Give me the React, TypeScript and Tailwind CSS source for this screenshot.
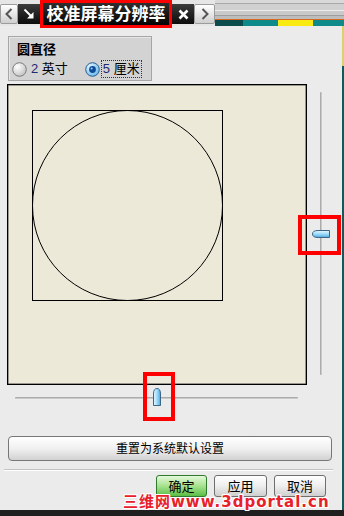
import React from 'react';

function SliderThumb({ vertical }: { vertical?: boolean }) {
    // bullet shaped thumb, pointing up (horizontal slider) or left (vertical slider)
    return (
        <svg width={vertical ? 18 : 8} height={vertical ? 8 : 18} viewBox={vertical ? '0 0 18 8' : '0 0 8 18'}>
            <defs>
                <linearGradient id={vertical ? 'tv' : 'th'} x1="0" y1="0" x2={vertical ? '0' : '1'} y2={vertical ? '1' : '0'}>
                    <stop offset="0" stopColor="#e6f8ff" />
                    <stop offset="0.5" stopColor="#9fdcfb" />
                    <stop offset="1" stopColor="#4ea8e0" />
                </linearGradient>
            </defs>
            {vertical ? (
                <path d="M17.5 0.5 H6 Q0.5 0.5 0.5 4 Q0.5 7.5 6 7.5 H17.5 Z" fill="url(#tv)" stroke="#3d6584" />
            ) : (
                <path d="M0.5 17.5 V6 Q0.5 0.5 4 0.5 Q7.5 0.5 7.5 6 V17.5 Z" fill="url(#th)" stroke="#3d6584" />
            )}
        </svg>
    );
}

function Radio({ checked }: { checked?: boolean }) {
    return (
        <svg width="15" height="15" viewBox="0 0 15 15">
            <defs>
                <radialGradient id={checked ? 'rc' : 'ru'} cx="0.35" cy="0.3" r="0.8">
                    <stop offset="0" stopColor={checked ? '#e8f6ff' : '#ffffff'} />
                    <stop offset="1" stopColor={checked ? '#5fb4ea' : '#bdbdbd'} />
                </radialGradient>
            </defs>
            <circle cx="7.5" cy="7.5" r="6.8" fill={`url(#${checked ? 'rc' : 'ru'})`} stroke={checked ? '#2a5f94' : '#7c7c7c'} />
            {checked && <circle cx="7.5" cy="7.5" r="3.4" fill="#0b4b98" />}
            {checked && <circle cx="6.6" cy="6.6" r="1" fill="#9fd0ff" />}
        </svg>
    );
}

export default function App() {
    return (
        <div className="relative w-[344px] h-[516px] overflow-hidden flex flex-col bg-[#ebebeb] font-[family-name:'Liberation_Sans','Noto_Sans_CJK_SC',sans-serif] text-black">
            {/* tab strip */}
            <div className="h-[26px] flex relative z-10">
                <div className="w-[215px] flex items-start bg-[#e6e6e6]">
                    <div className="mt-[4px] w-[18px] h-[20px] rounded-[2px] border border-[#9c9c9c] bg-gradient-to-b from-white to-[#cfcfcf] flex items-center justify-center">
                        <svg width="8" height="12" viewBox="0 0 8 12">
                            <path d="M6.5 1 L1.5 6 L6.5 11" fill="none" stroke="#555" strokeWidth="2" />
                        </svg>
                    </div>
                    <div className="mt-[4px] w-[22px] h-[20px] bg-gradient-to-b from-[#3c3c3c] to-[#0c0c0c] flex items-center justify-center">
                        <svg width="12" height="12" viewBox="0 0 12 12">
                            <path d="M1.5 1.5 L8 8" stroke="#fff" strokeWidth="2" />
                            <path d="M4 10.5 H10.5 V4 Z" fill="#fff" />
                        </svg>
                    </div>
                    <div className="w-[132px] h-[28px] border-[3px] border-[#ff0000] bg-gradient-to-b from-[#2e2e2e] to-[#050505] flex items-center justify-center">
                        <span className="text-[17px] leading-none font-bold text-white">校准屏幕分辨率</span>
                    </div>
                    <div className="mt-[4px] w-[22px] h-[20px] bg-gradient-to-b from-[#3c3c3c] to-[#0c0c0c] flex items-center justify-center">
                        <svg width="11" height="11" viewBox="0 0 11 11">
                            <path d="M1.5 1.5 L9.5 9.5 M9.5 1.5 L1.5 9.5" stroke="#fff" strokeWidth="2.6" />
                        </svg>
                    </div>
                    <div className="mt-[4px] w-[21px] h-[20px] rounded-[2px] border border-[#9c9c9c] bg-gradient-to-b from-white to-[#cfcfcf] flex items-center justify-center">
                        <svg width="8" height="12" viewBox="0 0 8 12">
                            <path d="M1.5 1 L6.5 6 L1.5 11" fill="none" stroke="#555" strokeWidth="2" />
                        </svg>
                    </div>
                </div>
                <div className="flex-1 flex flex-col">
                    <div className="h-[3px] bg-[#d9d9d9]" />
                    <div className="h-px bg-[#a9a9a9]" />
                    <div className="h-[6px] bg-[#d0d0d0]" />
                    <div className="h-px bg-[#ededed]" />
                    <div className="h-[4px] bg-[#c9c9c9]" />
                    <div className="h-px bg-[#9d9d9d]" />
                    <div className="h-[3px] bg-[#bdbdbd]" />
                    <div className="h-px bg-[#d9691f]" />
                    <div className="h-[6px] flex">
                        <div className="w-[28px] bg-[#0c4b4b]" />
                        <div className="w-[35px] bg-[#0f8a8a]" />
                        <div className="w-[35px] bg-[#f8ea12]" />
                        <div className="flex-1 bg-[#0f8a8a]" />
                    </div>
                </div>
            </div>

            <div className="flex-1 flex">
                <div className="flex-1 flex flex-col">
                    {/* group box */}
                    <div className="mt-[10px] ml-[8px] w-[144px] h-[45px] bg-[#d3d3d3] border border-[#a6a6a6] shadow-[inset_1px_1px_0_#e6e6e6] flex flex-col">
                        <div className="ml-[8px] mt-[5px] text-[13px] leading-[15px] font-bold">圆直径</div>
                        <div className="mt-[3px] ml-[3px] flex items-center text-[13px] leading-[16px]">
                            <Radio />
                            <span className="ml-[4px]"><span className="text-[#1c2a70]">2</span> 英寸</span>
                            <div className="ml-[17px]"><Radio checked /></div>
                            <span className="ml-px px-px border border-dotted border-[#333]"><span className="text-[#1c2a70]">5</span> 厘米</span>
                        </div>
                    </div>

                    {/* canvas + vertical slider */}
                    <div className="mt-[3px] flex h-[301px]">
                        <div className="ml-[7px] w-[300px] h-[301px] border border-[#000] shadow-[inset_0_0_0_0.5px_#444] bg-[#ece9d8]">
                            <svg width="298" height="299" viewBox="0 0 298 299">
                                <rect x="24.5" y="25.5" width="190" height="190" fill="none" stroke="#000" />
                                <circle cx="119.5" cy="120.5" r="95" fill="none" stroke="#000" />
                            </svg>
                        </div>
                        <div className="flex-1">
                            <div className="relative ml-[13px] mt-[8px] w-[3px] h-[283px] bg-gradient-to-r from-[#9d9d9d] via-[#c9c9c9] to-white rounded-[1px]">
                                <div className="absolute left-[-8px] top-[138px] flex">
                                    <SliderThumb vertical />
                                </div>
                            </div>
                        </div>
                    </div>

                    {/* horizontal slider */}
                    <div className="relative mt-[12px] ml-[15px] w-[283px] h-[3px] bg-gradient-to-b from-[#9d9d9d] via-[#c9c9c9] to-white rounded-[1px]">
                        <div className="absolute left-[138px] top-[-9px] flex">
                            <SliderThumb />
                        </div>
                    </div>

                    <button className="mt-[36px] ml-[8px] w-[324px] h-[25px] rounded-[4px] border border-[#777] bg-gradient-to-b from-white via-[#f0f0f0] to-[#d2d2d2] text-[12px] leading-none flex items-center justify-center">
                        重置为系统默认设置
                    </button>

                    <div className="mt-[8px] ml-[4px] w-[329px] h-[2px] border-t border-[#c3c3c3] bg-white" />

                    <div className="mt-[4px] pl-[156px] flex gap-[7px]">
                        <button className="w-[51px] h-[22px] rounded-[3px] border border-[#2f7a2f] bg-gradient-to-b from-[#e4f8da] via-[#a6e28e] to-[#58be44] text-[13px] leading-none flex items-center justify-center">确定</button>
                        <button className="w-[53px] h-[22px] rounded-[3px] border border-[#6f6f6f] bg-gradient-to-b from-white via-[#eeeeee] to-[#cfcfcf] text-[13px] leading-none flex items-center justify-center">应用</button>
                        <button className="w-[52px] h-[22px] rounded-[3px] border border-[#6f6f6f] bg-gradient-to-b from-white via-[#eeeeee] to-[#cfcfcf] text-[13px] leading-none flex items-center justify-center">取消</button>
                    </div>
                </div>
                <div className="w-[2px] flex flex-col">
                    <div className="h-[40px] bg-[#d9d26a]" />
                    <div className="flex-1 bg-[#0d5c5c]" />
                </div>
            </div>

            <div className="h-[6px] bg-[#1f1f1f]" />

            {/* annotations */}
            <div className="absolute left-[298px] top-[215px] w-[43px] h-[40px] border-4 border-[#ff0000]" />
            <div className="absolute left-[143px] top-[372px] w-[32px] h-[49px] border-4 border-[#ff0000]" />

            {/* watermark */}
            <div className="absolute left-[123px] top-[494px] text-[15px] leading-[16px] font-bold tracking-[1px] text-[#e8202a] font-[family-name:'DejaVu_Sans','Noto_Sans_CJK_SC',sans-serif] [text-shadow:1px_0_0_#fff,-1px_0_0_#fff,0_1px_0_#fff,0_-1px_0_#fff,1px_1px_0_#fff,-1px_-1px_0_#fff,1px_-1px_0_#fff,-1px_1px_0_#fff]">
                三维网www.3dportal.cn
            </div>
        </div>
    );
}
